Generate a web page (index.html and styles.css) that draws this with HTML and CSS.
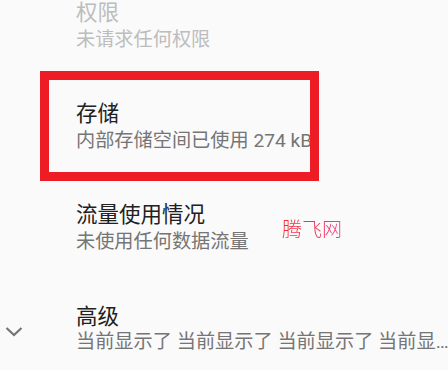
FILE: index.html
```html
<!DOCTYPE html>
<html lang="zh-CN">
<head>
<meta charset="utf-8">
<link rel="stylesheet" href="styles.css">
</head>
<body>
<div class="screen">
  <div class="list">
    <div class="pref disabled">
      <div class="icon-col"></div>
      <div class="texts">
        <div class="title">权限</div>
        <div class="summary">未请求任何权限</div>
      </div>
    </div>
    <div class="pref">
      <div class="icon-col"></div>
      <div class="texts">
        <div class="title">存储</div>
        <div class="summary">内部存储空间已使用 274 kB</div>
      </div>
    </div>
    <div class="pref">
      <div class="icon-col"></div>
      <div class="texts">
        <div class="title">流量使用情况</div>
        <div class="summary">未使用任何数据流量</div>
      </div>
    </div>
    <div class="pref advanced">
      <div class="icon-col">
        <svg class="chevron" width="28" height="16" viewBox="0 0 28 16">
          <polyline points="6.5,4 14,11 21.5,4" fill="none" stroke="#757575" stroke-width="2.2"/>
        </svg>
      </div>
      <div class="texts">
        <div class="title">高级</div>
        <div class="summary">当前显示了 当前显示了 当前显示了 当前显示了 当前显示了</div>
      </div>
    </div>
  </div>
  <div class="highlight"></div>
  <div class="watermark">腾飞网</div>
</div>
</body>
</html>
```

FILE: styles.css
```css
html, body {
  margin: 0;
  padding: 0;
  background: #fafafa;
}
.screen {
  position: relative;
  width: 448px;
  height: 370px;
  overflow: hidden;
  background: #fafafa;
  font-family: "Roboto", "Noto Sans CJK SC", sans-serif;
}
.list {
  margin-top: -25px;
}
.pref {
  display: flex;
  padding: 23px 0 23px 0;
  height: 55px;
}
.icon-col {
  width: 76px;
  flex: none;
  display: flex;
  align-items: center;
}
.texts {
  flex: 1;
  min-width: 0;
}
.title {
  font-size: 21.5px;
  line-height: 29px;
  color: #212121;
  white-space: nowrap;
}
.summary {
  font-size: 19.2px;
  line-height: 26px;
  color: #757575;
  white-space: nowrap;
  overflow: hidden;
  text-overflow: ellipsis;
}
.disabled .title,
.disabled .summary {
  color: #bdbdbd;
}
.advanced {
  padding-top: 27px;
}
.advanced .texts {
  flex: none;
  width: 374px;
}
.advanced .title {
  line-height: 24px;
}
.advanced .icon-col {
  padding-bottom: 2px;
}
.chevron {
  display: block;
}
.highlight {
  position: absolute;
  left: 40px;
  top: 71px;
  width: 261px;
  height: 92px;
  border: 9px solid #ee1c25;
}
.watermark {
  position: absolute;
  left: 282px;
  top: 219px;
  font-family: "Noto Sans CJK SC", sans-serif;
  font-size: 20px;
  line-height: 20px;
  font-weight: 300;
  background: linear-gradient(90deg, #f22a36 0%, #f2365a 55%, #ee4090 100%);
  -webkit-background-clip: text;
  background-clip: text;
  color: transparent;
}
```
